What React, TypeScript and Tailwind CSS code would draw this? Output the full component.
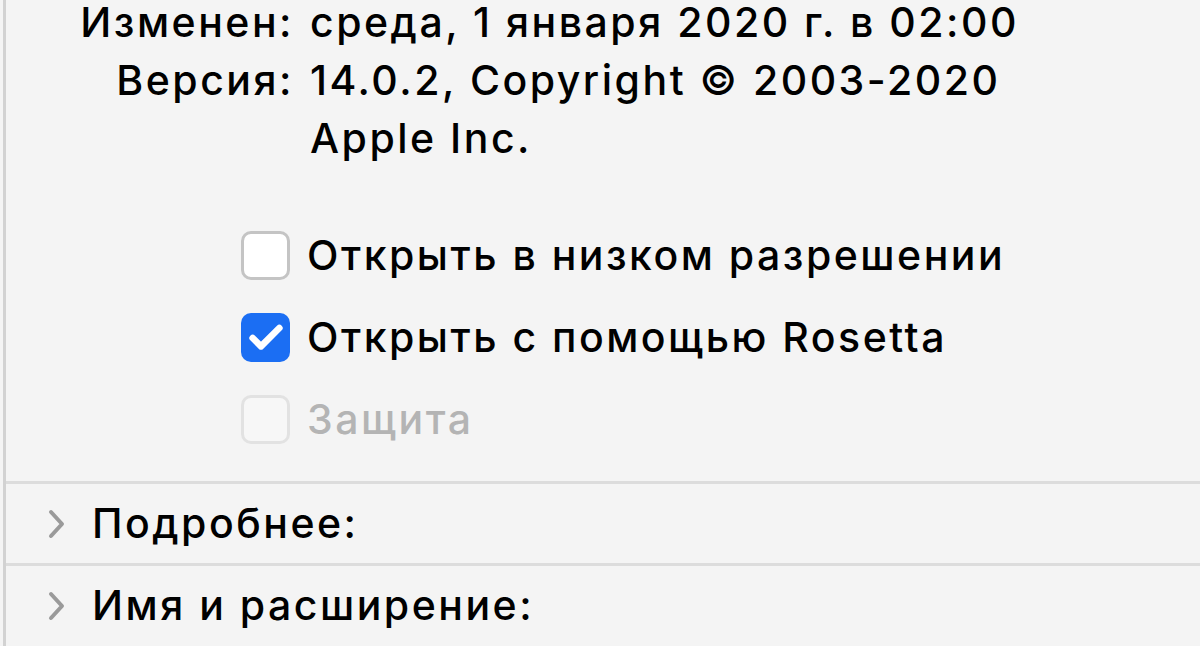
import { Check } from "lucide-react";

const font = { fontFamily: "Inter, 'Noto Sans', sans-serif" };

const options = [
  { label: "Открыть в низком разрешении", checked: false, disabled: false },
  { label: "Открыть с помощью Rosetta", checked: true, disabled: false },
  { label: "Защита", checked: false, disabled: true },
];

function Checkbox({ checked, disabled }: { checked: boolean; disabled: boolean }) {
  if (checked) {
    return (
      <div className="flex h-[49px] w-[49px] shrink-0 items-center justify-center rounded-[10px] bg-[#1b6ef3]">
        <Check className="h-[40px] w-[40px] text-white" strokeWidth={4} />
      </div>
    );
  }
  return (
    <div
      className={
        disabled
          ? "h-[49px] w-[49px] shrink-0 rounded-[10px] border-[3px] border-[#e2e2e2] bg-[#f7f7f7]"
          : "h-[49px] w-[49px] shrink-0 rounded-[10px] border-[3px] border-[#c4c4c4] bg-white"
      }
    />
  );
}

function Disclosure({ label }: { label: string }) {
  return (
    <div className="flex h-[82px] items-center border-t-[3px] border-[#dcdcdc]">
      <svg className="ml-[40px] h-[30px] w-[20px]" viewBox="0 0 20 30" fill="none">
        <path d="M5 3l11 12-11 12" stroke="#9a9a9a" strokeWidth="4" strokeLinecap="round" strokeLinejoin="round" />
      </svg>
      <span className="ml-[26px] text-[41px] font-medium tracking-[2.5px] text-black">{label}</span>
    </div>
  );
}

export default function App() {
  return (
    <div className="h-[646px] w-[1200px] overflow-hidden bg-[#f4f4f4] pl-[3px]" style={font}>
      <div className="h-full border-l-[3px] border-[#d2d2d2]">
        <div className="grid grid-cols-[288px_1fr] gap-x-[16px] text-[41px] font-medium tracking-[2.5px] text-black">
          <div className="text-right leading-[44px]">Изменен:</div>
          <div className="leading-[44px]">среда, 1 января 2020 г. в 02:00</div>
          <div className="mt-[7px] text-right leading-[58px]">Версия:</div>
          <div className="mt-[7px] leading-[58px]">
            <div>14.0.2, Copyright © 2003-2020</div>
            <div>Apple Inc.</div>
          </div>
        </div>

        <div className="mt-[64px] flex flex-col gap-[33px] pl-[235px]">
          {options.map((o) => (
            <div key={o.label} className="flex h-[49px] items-center gap-[17px]">
              <Checkbox checked={o.checked} disabled={o.disabled} />
              <span
                className={
                  o.disabled
                    ? "text-[41px] font-medium leading-[49px] tracking-[2.5px] text-[#b4b4b4]"
                    : "text-[41px] font-medium leading-[49px] tracking-[2.5px] text-black"
                }
              >
                {o.label}
              </span>
            </div>
          ))}
        </div>

        <div className="mt-[37px]">
          <Disclosure label="Подробнее:" />
          <Disclosure label="Имя и расширение:" />
        </div>
      </div>
    </div>
  );
}
